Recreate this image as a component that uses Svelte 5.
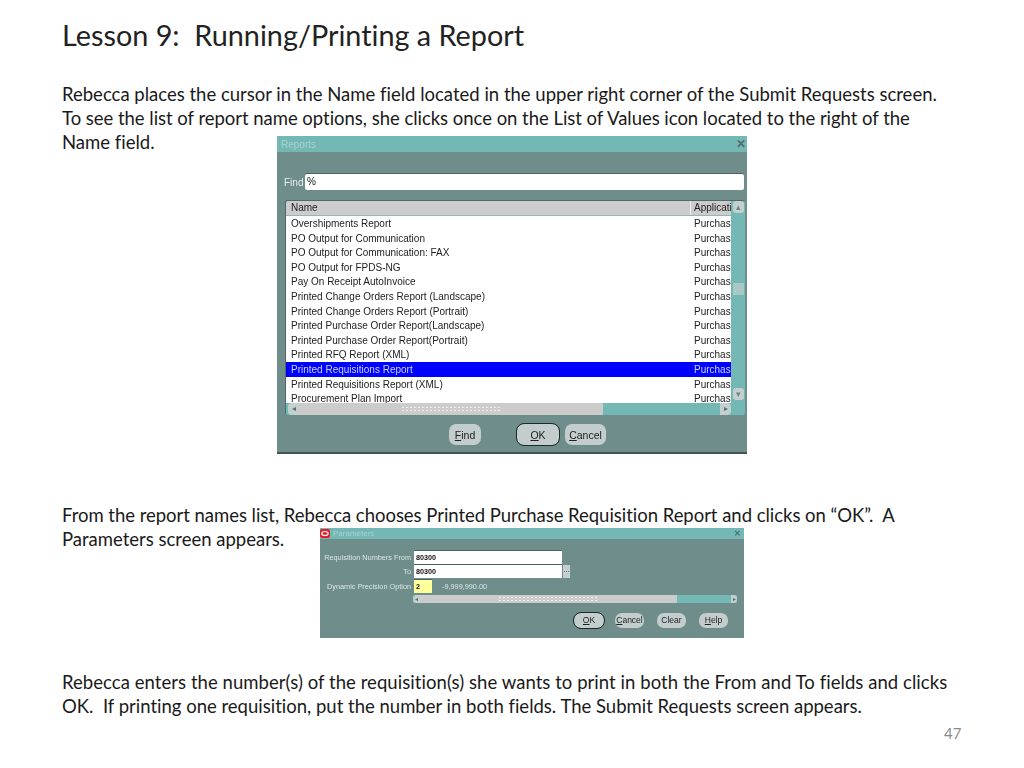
<script lang="ts">
  const reports = [
    "Overshipments Report",
    "PO Output for Communication",
    "PO Output for Communication: FAX",
    "PO Output for FPDS-NG",
    "Pay On Receipt AutoInvoice",
    "Printed Change Orders Report (Landscape)",
    "Printed Change Orders Report (Portrait)",
    "Printed Purchase Order Report(Landscape)",
    "Printed Purchase Order Report(Portrait)",
    "Printed RFQ Report (XML)",
    "Printed Requisitions Report",
    "Printed Requisitions Report (XML)",
    "Procurement Plan Import"
  ];
  const selected = "Printed Requisitions Report";
</script>

<main class="slide">
  <h1>Lesson 9:&nbsp; Running/Printing a Report</h1>

  <p class="line first">Rebecca places the cursor in the Name field located in the upper right corner of the Submit Requests screen.</p>
  <p class="line tight">To see the list of report name options, she clicks once on the List of Values icon located to the right of the</p>
  <div class="with-shot">
    <p class="line short">Name field.</p>
    <section class="dialog reports">
      <header class="titlebar"><span class="title">Reports</span><span class="close">✕</span></header>
      <div class="find-row">
        <span>Find</span>
        <div class="input">%</div>
      </div>
      <div class="list">
        <div class="cols">
          <div class="head"><span class="name">Name</span><span class="app">Applicati</span></div>
          <div class="rows">
            {#each reports as r}
              <div class="row" class:sel={r === selected}><span class="name">{r}</span><span class="app">Purchas</span></div>
            {/each}
          </div>
          <div class="hscroll">
            <span class="arrow">◂</span>
            <div class="thumb"><span class="grip"></span></div>
            <span class="arrow end">▸</span>
          </div>
        </div>
        <div class="vscroll">
          <span class="vbtn">▴</span>
          <span class="vgrip"></span>
          <span class="vbtn down">▾</span>
        </div>
      </div>
      <footer class="buttons">
        <button class="btn"><u>F</u>ind</button>
        <button class="btn default"><u>O</u>K</button>
        <button class="btn"><u>C</u>ancel</button>
      </footer>
    </section>
  </div>

  <p class="line after-reports tight">From the report names list, Rebecca chooses Printed Purchase Requisition Report and clicks on “OK”.&nbsp; A</p>
  <div class="with-shot">
    <p class="line short">Parameters screen appears.</p>
    <section class="dialog params">
      <header class="titlebar small">
        <svg class="logo" viewBox="0 0 10 9" width="10" height="9" aria-hidden="true">
          <rect width="10" height="9" rx="2" fill="#e0202a" />
          <ellipse cx="5" cy="4.5" rx="3.2" ry="2" fill="none" stroke="#fff" stroke-width="1.2" />
        </svg>
        <span class="title">Parameters</span><span class="close">✕</span>
      </header>
      <div class="form">
        <div class="frow"><label for="from">Requisition Numbers From</label><div id="from" class="input">80300</div></div>
        <div class="frow"><label for="to">To</label><div id="to" class="input">80300</div><span class="lov">...</span></div>
        <div class="frow"><label for="prec">Dynamic Precision Option</label><div id="prec" class="input yellow">2</div><span class="val">-9,999,990.00</span></div>
        <div class="pscroll">
          <span class="arrow">◂</span>
          <div class="thumb"><span class="grip"></span></div>
          <span class="arrow end">▸</span>
        </div>
      </div>
      <footer class="buttons">
        <button class="btn default"><u>O</u>K</button>
        <button class="btn"><u>C</u>ancel</button>
        <button class="btn">Clear</button>
        <button class="btn"><u>H</u>elp</button>
      </footer>
    </section>
  </div>

  <p class="line after-params">Rebecca enters the number(s) of the requisition(s) she wants to print in both the From and To fields and clicks</p>
  <p class="line">OK.&nbsp; If printing one requisition, put the number in both fields. The Submit Requests screen appears.</p>

  <div class="pageno">47</div>
</main>

<style>
  :global(body) {
    background: #fff;
  }

  .slide {
    width: 1024px;
    height: 768px;
    box-sizing: border-box;
    padding: 15px 0 0 62px;
    font-family: Lato, "Open Sans", sans-serif;
    font-variant-ligatures: none;
    color: #1a1a1a;
    overflow: hidden;
  }

  h1 {
    margin: 0;
    font-size: 28.8px;
    line-height: 40px;
    font-weight: 400;
    color: #222;
  }

  .line {
    margin: 0;
    font-size: 18.5px;
    line-height: 24px;
    white-space: nowrap;
  }

  .tight {
    letter-spacing: -0.03px;
  }

  .first {
    margin-top: 27px;
  }

  .with-shot {
    display: flex;
    align-items: flex-start;
  }

  .short {
    width: 215px;
    flex: none;
  }

  .dialog {
    flex: none;
    font-family: "Liberation Sans", sans-serif;
    background: #6f8d8b;
    color: #111;
    filter: blur(0.35px);
  }

  .reports {
    width: 470px;
    height: 318px;
    margin-top: 6px;
    border-bottom: 2px solid #3f5654;
    box-sizing: border-box;
    font-size: 10px;
  }

  .titlebar {
    height: 16px;
    background: #74b8b5;
    display: flex;
    align-items: center;
    padding: 0 0 0 4px;
    color: #a5d2cf;
    font-size: 10px;
  }

  .title {
    flex: 1;
  }

  .close {
    color: #4d6e6d;
    font-size: 12px;
    font-weight: 700;
    width: 11px;
  }

  .find-row {
    display: flex;
    align-items: center;
    margin: 22px 3px 0 7px;
    color: #e6efee;
  }

  .find-row span {
    width: 21px;
  }

  .input {
    background: #fff;
    color: #111;
    box-shadow: 0 -1px 0 #4a6664;
    font-size: 10px;
    line-height: 16px;
    height: 16px;
    padding-left: 2px;
    box-sizing: border-box;
  }

  .find-row .input {
    flex: 1;
    border-radius: 2px;
  }

  .list {
    display: flex;
    margin: 10px 2px 0 8px;
    height: 215px;
    border-radius: 3px;
    overflow: hidden;
    border-top: 1px solid #4f6a68;
    border-left: 1px solid #4f6a68;
    box-sizing: border-box;
    background: #74b8b5;
  }

  .cols {
    flex: 1;
    min-width: 0;
    display: flex;
    flex-direction: column;
  }

  .head {
    height: 14px;
    background: #cccccc;
    display: flex;
    border-bottom: 1px solid #8fb9b6;
    line-height: 14px;
    color: #222;
  }

  .rows {
    flex: 1;
    background: #fff;
    overflow: hidden;
    min-height: 0;
  }

  .row {
    height: 14.6px;
    line-height: 15px;
    display: flex;
    color: #222;
  }

  .row.sel {
    background: #0000ff;
    color: #c8d2ff;
  }

  .name {
    width: 404px;
    padding-left: 5px;
    box-sizing: border-box;
    white-space: nowrap;
  }

  .app {
    flex: 1;
    padding-left: 4px;
    overflow: hidden;
    white-space: nowrap;
  }

  .head .app {
    border-left: 1px solid #eee;
    padding-left: 3px;
  }

  .hscroll {
    height: 12px;
    flex: none;
    display: flex;
    align-items: center;
    background: #74b8b5;
    padding-left: 2px;
  }

  .arrow {
    width: 11px;
    height: 12px;
    flex: none;
    background: #c4cfcf;
    color: #55706f;
    font-size: 8px;
    line-height: 12px;
    text-align: center;
    border-radius: 4px 0 0 4px;
  }

  .arrow.end {
    margin-left: auto;
    border-radius: 0 4px 4px 0;
  }

  .thumb {
    height: 12px;
    background: #cccccc;
    display: flex;
    align-items: center;
    justify-content: center;
  }

  .hscroll .thumb {
    width: 304px;
  }

  .grip {
    display: block;
    width: 100px;
    height: 6px;
    background-image: radial-gradient(#f1f1f1 35%, transparent 40%);
    background-size: 4px 3px;
  }

  .vscroll {
    width: 14px;
    flex: none;
    background: #74b8b5;
    display: flex;
    flex-direction: column;
    align-items: center;
    padding-bottom: 15px;
  }

  .vbtn {
    width: 11px;
    height: 12px;
    background: #c4cfcf;
    color: #6b8685;
    font-size: 9px;
    line-height: 12px;
    text-align: center;
    border-radius: 3px;
  }

  .vbtn.down {
    margin-top: auto;
  }

  .vgrip {
    width: 11px;
    height: 12px;
    margin-top: 70px;
    background: #a9c9c7;
  }

  .buttons {
    display: flex;
  }

  .reports .buttons {
    margin: 9px 0 0 172px;
    gap: 6px;
  }

  .btn {
    font: inherit;
    font-size: 10.5px;
    color: #222;
    height: 21px;
    width: 41px;
    padding: 0;
    border: 0;
    background: #c4cdcd;
    border-radius: 7px;
  }

  .reports .btn:first-child {
    width: 32px;
    margin-right: 30px;
  }

  .btn.default {
    outline: 1px solid #1c2a2a;
    width: 42px;
  }

  .params {
    width: 424px;
    height: 110px;
    margin-top: 1px;
    margin-left: 43px;
    font-size: 7.3px;
    box-sizing: border-box;
    filter: blur(0.45px);
  }

  .titlebar.small {
    height: 11px;
    padding-left: 0;
    font-size: 8px;
  }

  .logo {
    flex: none;
    margin-right: 3px;
  }

  .params .close {
    font-size: 8px;
    width: 8px;
    margin-right: 2px;
  }

  .form {
    padding-top: 11px;
  }

  .frow {
    display: flex;
    align-items: center;
    height: 14.5px;
    color: #dbe6e5;
  }

  .frow label {
    width: 94px;
    flex: none;
    text-align: right;
    padding-right: 3px;
    box-sizing: border-box;
    white-space: nowrap;
  }

  .frow .input {
    width: 148px;
    height: 13px;
    line-height: 13px;
    font-size: 7.2px;
    font-weight: 700;
  }

  .frow .input.yellow {
    width: 18px;
    background: #ffff9c;
  }

  .lov {
    width: 7px;
    height: 13px;
    margin-left: 1px;
    background: #c4cfcf;
    color: #333;
    text-align: center;
    line-height: 10px;
  }

  .val {
    margin-left: 10px;
  }

  .pscroll {
    display: flex;
    height: 8px;
    margin: 1px 7px 0 93px;
    background: #74b8b5;
  }

  .pscroll .arrow {
    height: 8px;
    line-height: 8px;
    width: 6px;
    font-size: 6px;
  }

  .pscroll .thumb {
    width: 258px;
    height: 8px;
  }

  .params .buttons {
    gap: 13px;
    margin: 10px 0 0 254px;
  }

  .params .btn {
    font-size: 8.5px;
    height: 15px;
    width: 29px;
  }

  .params .btn.default {
    width: 30px;
    margin-right: -2px;
  }

  .after-reports {
    margin-top: 49px;
  }

  .after-params {
    margin-top: 32px;
    letter-spacing: 0.055px;
  }

  .pageno {
    margin: 6px 62px 0 auto;
    width: 18px;
    font-size: 15px;
    color: #8a8a8a;
  }
</style>
